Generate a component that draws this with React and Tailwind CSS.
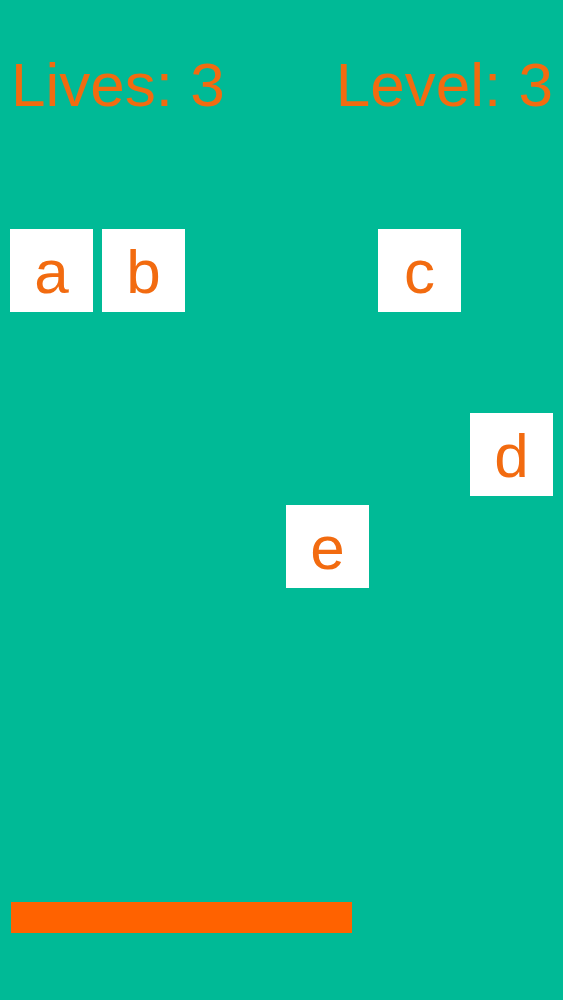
const TILES = [
  { ch: "a", cls: "col-start-1 row-start-1" },
  { ch: "b", cls: "col-start-2 row-start-1" },
  { ch: "c", cls: "col-start-5 row-start-1" },
  { ch: "d", cls: "col-start-6 row-start-3" },
  { ch: "e", cls: "col-start-4 row-start-4" },
];

function Tile({ ch, cls }) {
  return (
    <div className={"flex items-center justify-center bg-white pt-[2px] text-[62px] leading-none text-[#f26b10] " + cls}>
      {ch}
    </div>
  );
}

export default function App() {
  return (
    <div
      className="flex h-[1000px] w-full flex-col bg-[#00ba96]"
      style={{ fontFamily: '"Liberation Sans", Arial, sans-serif' }}
    >
      <div className="mt-[54px] flex justify-between pl-[11px] pr-[10px] text-[62px] leading-none text-[#f26b10]">
        <span>Lives: 3</span>
        <span>Level: 3</span>
      </div>

      <div className="mt-[113px] grid grid-cols-[repeat(6,83px)] grid-rows-[repeat(4,83px)] gap-[9px] px-[10px]">
        {TILES.map((t) => (
          <Tile key={t.ch} ch={t.ch} cls={t.cls} />
        ))}
      </div>

      <div className="ml-[11px] mt-[314px] h-[31px] w-[341px] bg-[#ff6200]" />
    </div>
  );
}
